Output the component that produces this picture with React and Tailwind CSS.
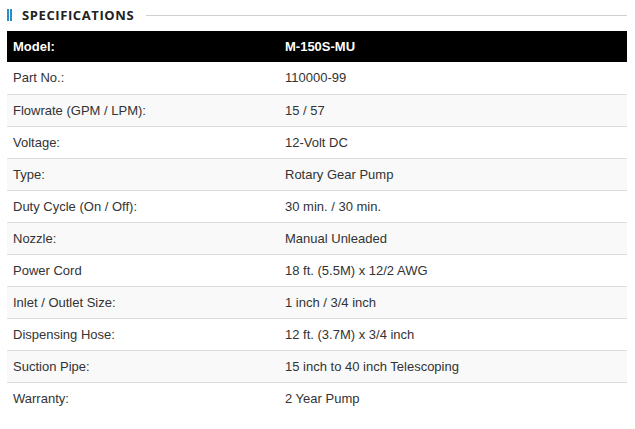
const specs = [
  ['Part No.:', '110000-99'],
  ['Flowrate (GPM / LPM):', '15 / 57'],
  ['Voltage:', '12-Volt DC'],
  ['Type:', 'Rotary Gear Pump'],
  ['Duty Cycle (On / Off):', '30 min. / 30 min.'],
  ['Nozzle:', 'Manual Unleaded'],
  ['Power Cord', '18 ft. (5.5M) x 12/2 AWG'],
  ['Inlet / Outlet Size:', '1 inch / 3/4 inch'],
  ['Dispensing Hose:', '12 ft. (3.7M) x 3/4 inch'],
  ['Suction Pipe:', '15 inch to 40 inch Telescoping'],
  ['Warranty:', '2 Year Pump'],
]

export default function App() {
  return (
    <div className="w-[635px] h-[429px] bg-white pl-[7px] pr-[8px] pt-[9px]" style={{ fontFamily: '"Liberation Sans", Arial, sans-serif' }}>
      {/* Section title */}
      <div className="flex items-center h-[12px]">
        <div className="flex gap-[1px] h-[12px]">
          <span className="w-[2px] h-full bg-[#2a8fc9]" />
          <span className="w-[2px] h-full bg-[#2a8fc9]" />
        </div>
        <h2
          className="ml-[10px] text-[13px] font-bold tracking-[0.6px] text-[#222] leading-none"
          style={{ fontFamily: '"Open Sans", sans-serif' }}
        >
          SPECIFICATIONS
        </h2>
        <div className="flex-1 ml-[12px] h-px bg-[#cfcfcf]" />
      </div>

      {/* Table */}
      <div className="mt-[10px] text-[13px] text-[#333]">
        <div className="flex items-center h-[31px] bg-black text-white font-bold">
          <div className="w-[278px] pl-[6px]">Model:</div>
          <div>M-150S-MU</div>
        </div>
        {specs.map(([label, value], i) => (
          <div
            key={label}
            className={`flex items-center h-[32px] ${i > 0 ? 'border-t border-[#dddddd]' : ''} ${i % 2 === 1 ? 'bg-[#f9f9f9]' : 'bg-white'}`}
          >
            <div className="w-[278px] pl-[6px]">{label}</div>
            <div>{value}</div>
          </div>
        ))}
      </div>
    </div>
  )
}
